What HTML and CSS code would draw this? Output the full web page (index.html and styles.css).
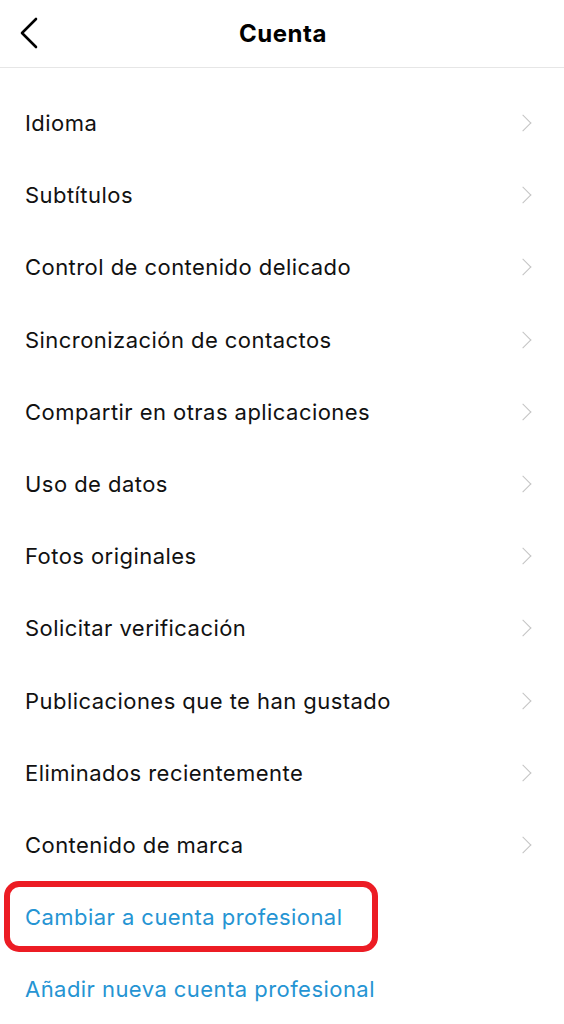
FILE: index.html
```html
<!DOCTYPE html>
<html lang="es">
<head>
  <meta charset="UTF-8" />
  <meta name="viewport" content="width=device-width, initial-scale=1.0" />
  <title>Cuenta</title>
  <link rel="stylesheet" href="styles.css">
</head>
<body>
  <header class="topbar">
    <button class="back" aria-label="Atrás">
      <svg width="22" height="32" viewBox="0 0 22 32"><path d="M18 2 L4 16 L18 30" fill="none" stroke="#000" stroke-width="2.6" stroke-linecap="round" stroke-linejoin="round"/></svg>
    </button>
    <h1>Cuenta</h1>
  </header>
  <ul class="menu">
    <li class="item"><span>Idioma</span><i class="chev"></i></li>
    <li class="item"><span>Subtítulos</span><i class="chev"></i></li>
    <li class="item"><span>Control de contenido delicado</span><i class="chev"></i></li>
    <li class="item"><span>Sincronización de contactos</span><i class="chev"></i></li>
    <li class="item"><span>Compartir en otras aplicaciones</span><i class="chev"></i></li>
    <li class="item"><span>Uso de datos</span><i class="chev"></i></li>
    <li class="item"><span>Fotos originales</span><i class="chev"></i></li>
    <li class="item"><span>Solicitar verificación</span><i class="chev"></i></li>
    <li class="item"><span>Publicaciones que te han gustado</span><i class="chev"></i></li>
    <li class="item"><span>Eliminados recientemente</span><i class="chev"></i></li>
    <li class="item"><span>Contenido de marca</span><i class="chev"></i></li>
    <li class="item link marked"><span>Cambiar a cuenta profesional</span></li>
    <li class="item link"><span>Añadir nueva cuenta profesional</span></li>
  </ul>
</body>
</html>
```

FILE: styles.css
```css
body {
  margin: 0;
  font-family: Inter, "Liberation Sans", Arial, sans-serif;
  background: #fff;
  color: #111;
}
.topbar {
  position: relative;
  height: 67px;
  display: flex;
  align-items: center;
  justify-content: center;
  border-bottom: 1px solid #e6e6e6;
}
.topbar h1 {
  margin: 0 0 0 2px;
  font-size: 24px;
  font-weight: 700;
  letter-spacing: 0.5px;
  color: #000;
}
.back {
  position: absolute;
  left: 18px;
  top: 17px;
  padding: 0;
  border: 0;
  background: none;
}
.menu {
  list-style: none;
  margin: 0;
  padding: 19px 0 0;
}
.item {
  position: relative;
  height: 72.2px;
  display: flex;
  align-items: center;
  justify-content: space-between;
  padding: 0 35px 0 25px;
  font-size: 22px;
  letter-spacing: 0.45px;
}
.chev {
  width: 11px;
  height: 11px;
  border-top: 1.5px solid #c4c4c4;
  border-right: 1.5px solid #c4c4c4;
  transform: rotate(45deg);
}
.link {
  color: #2594d3;
}
.marked::after {
  content: "";
  position: absolute;
  left: 4px;
  top: 0;
  width: 362px;
  height: 59px;
  border: 6px solid #ec1c24;
  border-radius: 15px;
}
```
